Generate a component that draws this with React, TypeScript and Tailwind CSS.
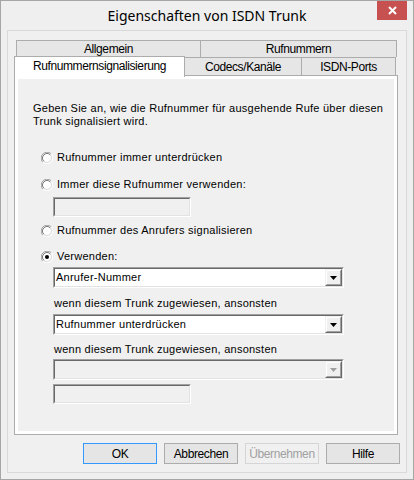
import React from 'react';

const UI_FONT = "font-['Liberation_Sans',Arial,sans-serif]";

// classic sunken radio circle
const Radio: React.FC<{ checked?: boolean }> = ({ checked }) => (
  <svg width="12" height="12" viewBox="0 0 12 12" className="shrink-0">
    <path d="M10.24 1.76 A6 6 0 0 0 1.76 10.24" fill="none" stroke="#a0a0a0" strokeWidth="1" />
    <path d="M1.76 10.24 A6 6 0 0 0 10.24 1.76" fill="none" stroke="#ffffff" strokeWidth="1" />
    <circle cx="6" cy="6" r="4.5" fill="#ffffff" stroke="#dcdcdc" strokeWidth="1" />
    <path d="M9.18 2.82 A4.5 4.5 0 0 0 2.82 9.18" fill="none" stroke="#7a7a7a" strokeWidth="1" />
    {checked && <circle cx="6" cy="6" r="2" fill="#000000" />}
  </svg>
);

const RadioRow: React.FC<{ label: string; checked?: boolean; mt: string }> = ({ label, checked, mt }) => (
  <div className={`flex items-center h-[13px] ml-[8px] ${mt}`}>
    <Radio checked={checked} />
    <span className="ml-[4px] leading-[13px] whitespace-nowrap">{label}</span>
  </div>
);

// two-pixel sunken edge
const Sunken: React.FC<{ className?: string; children?: React.ReactNode }> = ({ className = '', children }) => (
  <div className={`border border-t-[#a0a0a0] border-l-[#a0a0a0] border-b-white border-r-white ${className}`}>
    <div className="h-full border border-t-[#696969] border-l-[#696969] border-b-[#e3e3e3] border-r-[#e3e3e3]">
      {children}
    </div>
  </div>
);

const TextBox: React.FC<{ mt: string }> = ({ mt }) => (
  <Sunken className={`w-[138px] h-[20px] ml-[20px] ${mt}`}>
    <div className="h-full bg-[#f0f0f0]" />
  </Sunken>
);

const Combo: React.FC<{ value?: string; disabled?: boolean; mt: string }> = ({ value, disabled, mt }) => (
  <Sunken className={`w-[291px] h-[21px] ml-[20px] ${mt}`}>
    <div className={`h-full flex ${disabled ? 'bg-[#f0f0f0]' : 'bg-white'}`}>
      <div className="flex-1 pl-[1px] leading-[17px] whitespace-nowrap">{value}</div>
      <div className="w-[17px] h-full border border-t-[#f0f0f0] border-l-[#f0f0f0] border-b-[#696969] border-r-[#696969]">
        <div className="h-full bg-[#f0f0f0] border border-t-white border-l-white border-b-[#a0a0a0] border-r-[#a0a0a0] flex items-center justify-center">
          <svg width="7" height="4" viewBox="0 0 7 4">
            <path d="M0 0 H7 L3.5 4 Z" fill={disabled ? '#a0a0a0' : '#000000'} />
          </svg>
        </div>
      </div>
    </div>
  </Sunken>
);

const Button: React.FC<{ label: string; variant?: 'default' | 'disabled' }> = ({ label, variant }) => (
  <div
    className={`w-[74px] h-[21px] flex items-center justify-center border text-[12px] tracking-[-0.4px] ${
      variant === 'default'
        ? 'border-[#3399ff] bg-[#e5e5e5] text-black'
        : variant === 'disabled'
        ? 'border-[#d5d5d5] bg-[#f0f0f0] text-[#a0a0a0]'
        : 'border-[#acacac] bg-[#e5e5e5] text-black'
    }`}
  >
    {label}
  </div>
);

const App: React.FC = () => {
  return (
    <div className={`w-[414px] h-[480px] border border-[#a6a6a6] bg-[#efefef] flex flex-col ${UI_FONT}`}>
      {/* Title bar */}
      <div className="relative h-[29px] flex items-center justify-center">
        <span className="font-['Noto_Sans',sans-serif] text-[14px] text-black pb-[1px]">Eigenschaften von ISDN Trunk</span>
        <div className="absolute top-0 right-[6px] w-[30px] h-[19px] bg-[#c75050] flex items-center justify-center">
          <svg width="9" height="9" viewBox="0 0 9 9">
            <path d="M1 1 L8 8 M8 1 L1 8" stroke="#ffffff" strokeWidth="2" />
          </svg>
        </div>
      </div>

      {/* Client area */}
      <div className="mx-[6px] w-[400px] h-[443px] border border-[#d9d9d9] bg-[#f0f0f0] pt-[9px] pl-[6px]">
        <div className="w-[384px] text-[12px] tracking-[-0.4px] text-black">
          {/* Tab row 1 */}
          <div className="flex ml-[2px] h-[17px]">
            <div className="w-[184px] h-full border-l border-t border-[#acacac] bg-[#e6e6e6] flex items-center justify-center leading-none">Allgemein</div>
            <div className="w-[197px] h-full border-l border-t border-r border-[#acacac] bg-[#e6e6e6] flex items-center justify-center leading-none">Rufnummern</div>
          </div>
          {/* Tab row 2 */}
          <div className="flex h-[18px]">
            <div className="relative z-10 -mt-px w-[171px] h-[21px] border-l border-t border-r border-[#acacac] bg-white flex justify-center pt-[2px] leading-[14px]">Rufnummernsignalisierung</div>
            <div className="w-[116px] h-full border-t border-[#acacac] bg-[#e6e6e6] flex items-center justify-center leading-none pt-[1px]">Codecs/Kanäle</div>
            <div className="w-[95px] h-full border-l border-t border-r border-[#acacac] bg-[#e6e6e6] flex items-center justify-center leading-none pt-[1px]">ISDN-Ports</div>
          </div>
        </div>

        {/* Tab panel */}
        <div className="w-[384px] h-[360px] border border-[#acacac] bg-white p-[3px]">
          <div className="h-full bg-[#f0f0f0] pl-[15px] pt-[23px] text-[11px] tracking-[0.25px] text-black">
            <p className="leading-[13px]">
              Geben Sie an, wie die Rufnummer für ausgehende Rufe über diesen
              <br />
              Trunk signalisiert wird.
            </p>
            <RadioRow mt="mt-[23px]" label="Rufnummer immer unterdrücken" />
            <RadioRow mt="mt-[14px]" label="Immer diese Rufnummer verwenden:" />
            <TextBox mt="mt-[6px]" />
            <RadioRow mt="mt-[7px]" label="Rufnummer des Anrufers signalisieren" />
            <RadioRow mt="mt-[13px]" label="Verwenden:" checked />
            <Combo mt="mt-[4px]" value="Anrufer-Nummer" />
            <div className="mt-[9px] ml-[21px] leading-[13px]">wenn diesem Trunk zugewiesen, ansonsten</div>
            <Combo mt="mt-[4px]" value="Rufnummer unterdrücken" />
            <div className="mt-[8px] ml-[21px] leading-[13px]">wenn diesem Trunk zugewiesen, ansonsten</div>
            <Combo mt="mt-[3px]" disabled />
            <TextBox mt="mt-[4px]" />
          </div>
        </div>

        {/* Buttons */}
        <div className="flex gap-[7px] mt-[8px] ml-[69px]">
          <Button label="OK" variant="default" />
          <Button label="Abbrechen" />
          <Button label="Übernehmen" variant="disabled" />
          <Button label="Hilfe" />
        </div>
      </div>
    </div>
  );
};

export default App;
